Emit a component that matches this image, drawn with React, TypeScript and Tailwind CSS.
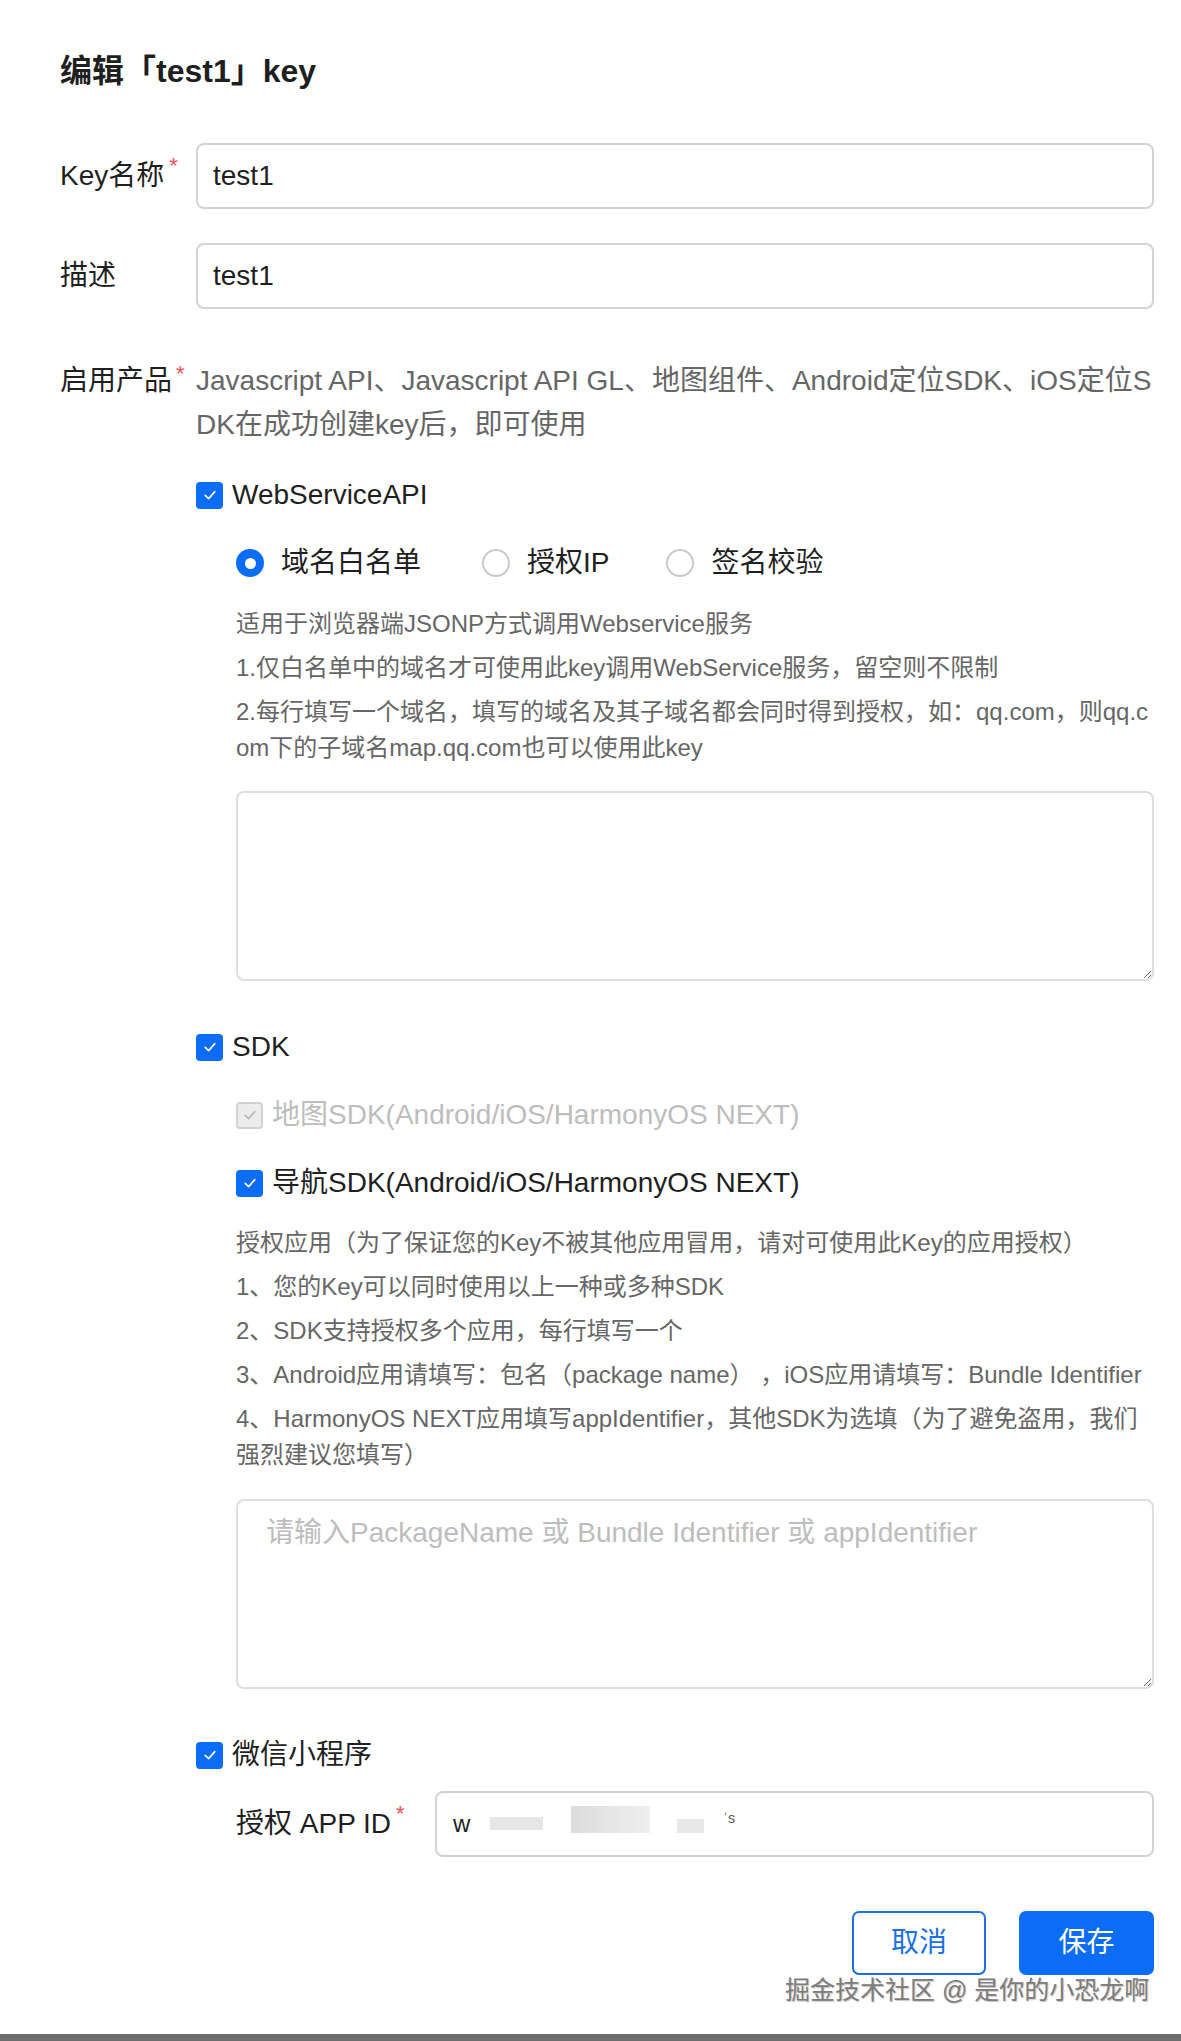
import React from 'react';

const BLUE = 'bg-[#0b6cf6]';

const Required = () => (
  <span className="ml-[5px] self-start text-[22px] leading-none text-[#f0505a]">*</span>
);

const Checkbox = ({ disabled = false }: { disabled?: boolean }) => (
  <span
    className={`flex h-[27px] w-[27px] shrink-0 items-center justify-center rounded-[4px] ${
      disabled ? 'border-2 border-[#d2d2d2] bg-[#ececec]' : BLUE
    }`}
  >
    <svg viewBox="0 0 16 16" className="h-[16px] w-[16px]" fill="none">
      <path
        d="M3.2 8.4 L6.6 11.6 L12.8 4.6"
        stroke={disabled ? '#b9b9b9' : '#ffffff'}
        strokeWidth="1.6"
        strokeLinecap="round"
        strokeLinejoin="round"
      />
    </svg>
  </span>
);

const CheckRow = ({ label, disabled = false, className = '' }: { label: string; disabled?: boolean; className?: string }) => (
  <div className={`flex h-[44px] items-center gap-[9px] ${className}`}>
    <Checkbox disabled={disabled} />
    <span className={disabled ? 'text-[#bdbdbd]' : 'text-[#1f1f1f]'}>{label}</span>
  </div>
);

const Radio = ({ label, checked = false, className = 'mr-[61px]' }: { label: string; checked?: boolean; className?: string }) => (
  <div className={`flex items-center gap-[17px] ${className}`}>
    {checked ? (
      <span className={`flex h-[28px] w-[28px] items-center justify-center rounded-full ${BLUE}`}>
        <span className="h-[11px] w-[11px] rounded-full bg-white" />
      </span>
    ) : (
      <span className="h-[28px] w-[28px] rounded-full border-2 border-[#c9c9c9] bg-white" />
    )}
    <span className="text-[#1f1f1f]">{label}</span>
  </div>
);

const Help = ({ lines, className = '' }: { lines: React.ReactNode[]; className?: string }) => (
  <div className={`text-[24px] leading-[36px] text-[#666666] ${className}`}>
    {lines.map((line, i) => (
      <p key={i} className={i === 0 ? '' : 'mt-[8px]'}>
        {line}
      </p>
    ))}
  </div>
);

export default function App() {
  return (
    <div
      className="relative flex min-h-[2041px] w-full flex-col bg-white text-[28px] text-[#1f1f1f]"
      style={{ fontFamily: '"Liberation Sans", "Noto Sans CJK SC", sans-serif' }}
    >
      <div className="h-[2034px] pl-[60px] pr-[27px]">
        {/* Title */}
        <h1 className="mt-[47px] text-[32px] font-bold leading-[48px] text-[#1f1f1f]">编辑「test1」key</h1>

        {/* Key name */}
        <div className="mt-[48px] flex items-center">
          <label className="flex w-[136px] shrink-0 items-center">
            Key名称
            <Required />
          </label>
          <input
            readOnly
            value="test1"
            className="h-[66px] flex-1 rounded-[8px] border-2 border-[#d3d3d3] bg-white px-[15px] text-[28px] text-[#1f1f1f] outline-none"
          />
        </div>

        {/* Description */}
        <div className="mt-[34px] flex items-center">
          <label className="w-[136px] shrink-0">描述</label>
          <input
            readOnly
            value="test1"
            className="h-[66px] flex-1 rounded-[8px] border-2 border-[#d3d3d3] bg-white px-[15px] text-[28px] text-[#1f1f1f] outline-none"
          />
        </div>

        {/* Products */}
        <div className="mt-[50px] flex items-start">
          <label className="flex w-[136px] shrink-0 leading-[44px]">
            启用产品
            <span className="ml-[4px] mt-[4px] text-[22px] leading-none text-[#f0505a]">*</span>
          </label>
          <div className="min-w-0 flex-1">
            <p className="leading-[44px] text-[#666666]">
              Javascript API、Javascript API GL、地图组件、Android定位SDK、iOS定位S
              <br />
              DK在成功创建key后，即可使用
            </p>

            {/* WebServiceAPI */}
            <CheckRow label="WebServiceAPI" className="mt-[26px]" />
            <div className="pl-[40px]">
              <div className="mt-[24px] flex h-[44px] items-center">
                <Radio label="域名白名单" checked />
                <Radio label="授权IP" className="mr-[57px]" />
                <Radio label="签名校验" />
              </div>
              <Help
                className="mt-[21px]"
                lines={[
                  '适用于浏览器端JSONP方式调用Webservice服务',
                  '1.仅白名单中的域名才可使用此key调用WebService服务，留空则不限制',
                  <>
                    2.每行填写一个域名，填写的域名及其子域名都会同时得到授权，如：qq.com，则qq.c
                    <br />
                    om下的子域名map.qq.com也可以使用此key
                  </>,
                ]}
              />
              <textarea className="mt-[25px] block h-[190px] w-full rounded-[8px] border-2 border-[#dedede] bg-white px-[28px] py-[10px] text-[28px] outline-none" />
            </div>

            {/* SDK */}
            <CheckRow label="SDK" className="mt-[44px]" />
            <div className="pl-[40px]">
              <CheckRow label="地图SDK(Android/iOS/HarmonyOS NEXT)" disabled className="mt-[24px]" />
              <CheckRow label="导航SDK(Android/iOS/HarmonyOS NEXT)" className="mt-[24px]" />
              <Help
                className="mt-[20px]"
                lines={[
                  '授权应用（为了保证您的Key不被其他应用冒用，请对可使用此Key的应用授权）',
                  '1、您的Key可以同时使用以上一种或多种SDK',
                  '2、SDK支持授权多个应用，每行填写一个',
                  '3、Android应用请填写：包名（package name） ，iOS应用请填写：Bundle Identifier',
                  <>
                    4、HarmonyOS NEXT应用填写appIdentifier，其他SDK为选填（为了避免盗用，我们
                    <br />
                    强烈建议您填写）
                  </>,
                ]}
              />
              <textarea
                placeholder="请输入PackageName 或 Bundle Identifier 或 appIdentifier"
                className="mt-[26px] block h-[190px] w-full rounded-[8px] border-2 border-[#dedede] bg-white px-[28px] py-[10px] text-[28px] leading-[44px] outline-none placeholder:text-[#bdbdbd]"
              />
            </div>

            {/* WeChat mini program */}
            <CheckRow label="微信小程序" className="mt-[44px]" />
            <div className="mt-[14px] flex items-center pl-[40px]">
              <label className="flex w-[199px] shrink-0 items-center">
                授权 APP ID
                <Required />
              </label>
              <div className="flex h-[66px] flex-1 items-center rounded-[8px] border-2 border-[#d3d3d3] bg-white pl-[16px]">
                <span className="text-[24px]">w</span>
                <span className="ml-[20px] mt-[-2px] h-[13px] w-[53px] bg-[#e6e6e6]" />
                <span className="ml-[28px] mt-[-10px] h-[27px] w-[79px] bg-gradient-to-r from-[#dcdcdc] to-[#efefef]" />
                <span className="ml-[27px] mt-[4px] h-[14px] w-[27px] bg-[#e8e8e8]" />
                <span className="ml-[19px] mt-[-12px] text-[14px] text-[#555]">ˈs</span>
              </div>
            </div>
          </div>
        </div>

        {/* Footer buttons */}
        <div className="mt-[54px] flex justify-end gap-[33px]">
          <button className="h-[64px] w-[134px] rounded-[7px] border-2 border-[#1a6fe8] bg-white text-[28px] text-[#1a6fe8]">
            取消
          </button>
          <button className="h-[64px] w-[135px] rounded-[7px] bg-[#0b6cf6] text-[28px] text-white">保存</button>
        </div>
      </div>

      {/* Watermark */}
      <div className="absolute left-[785px] top-[1974px] text-[25px] leading-[32px] text-[#7c7c7c] [text-shadow:1px_1px_1px_#c4c4c4]">
        掘金技术社区 @ 是你的小恐龙啊
      </div>

      <div className="h-[7px] bg-[#6d6d6d]" />
    </div>
  );
}
